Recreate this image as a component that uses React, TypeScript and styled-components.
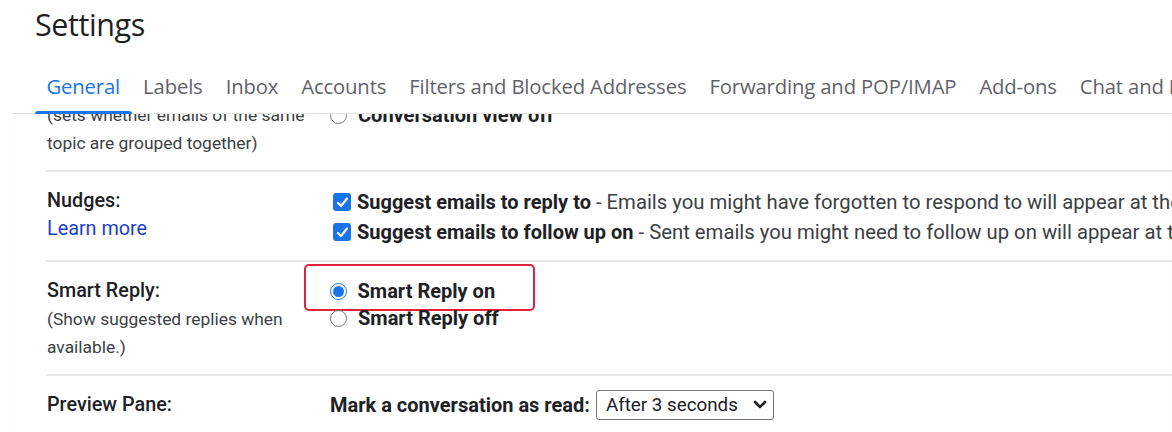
import * as React from "react";
import styled, { createGlobalStyle } from "styled-components";

const GlobalStyle = createGlobalStyle`
  html, body {
    margin: 0;
    padding: 0;
    background: #fff;
    overflow: hidden;
  }
  body {
    width: 1172px;
    height: 432px;
    font-family: Roboto, "Liberation Sans", sans-serif;
    color: #202124;
  }
`;

const Page = styled.div`
  width: 1172px;
  height: 432px;
  overflow: hidden;
  display: flex;
  flex-direction: column;
`;

const Header = styled.div`
  height: 57px;
  display: flex;
  align-items: center;
  padding-left: 35px;
  flex-shrink: 0;
`;

const Title = styled.h1`
  margin: 0;
  font-family: "Open Sans", Inter, sans-serif;
  font-weight: 400;
  font-size: 30.5px;
  letter-spacing: -0.4px;
  color: #1f1f1f;
  transform: translateY(-5px);
`;

const Panel = styled.div`
  margin-left: 12px;
  flex: 1;
  display: flex;
  flex-direction: column;
  min-height: 0;
  box-shadow: inset 0 1px 0 #e8e8e8, inset 0 2px 2px rgba(0, 0, 0, 0.04);
`;

const TabBar = styled.div`
  height: 56px;
  display: flex;
  align-items: stretch;
  padding-left: 23px;
  border-bottom: 1px solid #e3e3e3;
  white-space: nowrap;
  flex-shrink: 0;
  position: relative;
  z-index: 1;
  background: #fff;
`;

const Tab = styled.div<{ active?: boolean }>`
  position: relative;
  display: flex;
  align-items: center;
  padding: 2px 11.5px 0;
  font-family: "Open Sans", Inter, sans-serif;
  font-size: 20.3px;
  letter-spacing: -0.15px;
  color: ${(p) => (p.active ? "#1a73e8" : "#5f6368")};
  &:after {
    content: "";
    display: ${(p) => (p.active ? "block" : "none")};
    position: absolute;
    left: 0;
    right: 0;
    bottom: -1px;
    height: 3px;
    border-radius: 3px 3px 0 0;
    background: #1a73e8;
  }
`;

const Content = styled.div`
  flex: 1;
  overflow: hidden;
  padding-left: 34px;
`;

const Scroller = styled.div`
  margin-top: -56px;
`;

const Row = styled.div<{ last?: boolean }>`
  display: grid;
  grid-template-columns: 283px 1fr;
  padding: 15px 0 13px 1px;
  border-bottom: ${(p) => (p.last ? "none" : "2px solid #e8e8e8")};
  font-size: 19.8px;
  line-height: 28px;
  white-space: nowrap;
`;

const LabelCol = styled.div`
  display: flex;
  flex-direction: column;
`;

const Label = styled.div`
  font-weight: 500;
  color: #202124;
`;

const Sub = styled.div`
  font-size: 17.4px;
  color: #3c4043;
  white-space: normal;
  width: 270px;
`;

const Link = styled.a`
  color: #1a3fd0;
  text-decoration: none;
`;

const OptionCol = styled.div`
  display: flex;
  flex-direction: column;
  align-items: flex-start;
  min-width: 0;
`;

const Option = styled.label<{ tall?: boolean }>`
  display: flex;
  align-items: center;
  gap: 11px;
  height: ${(p) => (p.tall ? "30px" : "28px")};
  color: #202124;
`;

const Highlight = styled.div`
  margin: -13px 0 -7px -26px;
  padding: 11px 38px 4px 23.5px;
  border: 2.5px solid #e3203a;
  border-radius: 5px;
`;

const RadioDot = styled.span<{ checked?: boolean }>`
  width: 17px;
  height: 17px;
  box-sizing: border-box;
  border-radius: 50%;
  border: 1px solid ${(p) => (p.checked ? "#1a73e8" : "#767676")};
  background: #fff;
  display: flex;
  align-items: center;
  justify-content: center;
  flex-shrink: 0;
  &:after {
    content: "";
    display: ${(p) => (p.checked ? "block" : "none")};
    width: 11px;
    height: 11px;
    border-radius: 50%;
    background: #1a73e8;
  }
`;

const CheckBox = styled.span`
  width: 18px;
  height: 18px;
  margin-left: 3px;
  border-radius: 3px;
  background: #1a73e8;
  display: flex;
  align-items: center;
  justify-content: center;
  flex-shrink: 0;
  margin-right: -5px;
`;

const Strong = styled.b`
  font-weight: 700;
  font-size: 20px;
`;

const Desc = styled.span`
  font-size: 20.3px;
  color: #3c4043;
`;

const SelectRow = styled.div`
  display: flex;
  align-items: center;
  gap: 6px;
  height: 28px;
`;

const SelectBox = styled.div`
  width: 178px;
  height: 30px;
  box-sizing: border-box;
  border: 1px solid #767676;
  border-radius: 3px;
  display: flex;
  align-items: center;
  justify-content: space-between;
  padding: 0 3px 0 9px;
  font-size: 18.8px;
  color: #202124;
`;

const Radio = ({ checked, children }: { checked?: boolean; children: React.ReactNode }) => (
  <Option>
    <RadioDot checked={checked} />
    <Strong>{children}</Strong>
  </Option>
);

const Check = ({ title, desc }: { title: string; desc: string }) => (
  <Option tall>
    <CheckBox>
      <svg width="13" height="13" viewBox="0 0 13 13">
        <path d="M2 7 L5 10 L11 2.5" fill="none" stroke="#fff" strokeWidth="2.2" strokeLinecap="round" strokeLinejoin="round" />
      </svg>
    </CheckBox>
    <span>
      <Strong>{title}</Strong>
      <Desc> - {desc}</Desc>
    </span>
  </Option>
);

const tabs = [
  "General",
  "Labels",
  "Inbox",
  "Accounts",
  "Filters and Blocked Addresses",
  "Forwarding and POP/IMAP",
  "Add-ons",
  "Chat and Meet",
  "Advanced",
];

const App = () => (
  <Page>
    <GlobalStyle />
    <Header>
      <Title>Settings</Title>
    </Header>
    <Panel>
      <TabBar>
        {tabs.map((t, i) => (
          <Tab key={t} active={i === 0}>
            {t}
          </Tab>
        ))}
      </TabBar>
      <Content>
        <Scroller>
          <Row>
            <LabelCol>
              <Label>Conversation View:</Label>
              <Sub>(sets whether emails of the same topic are grouped together)</Sub>
            </LabelCol>
            <OptionCol>
              <Radio checked>Conversation view on</Radio>
              <Radio>Conversation view off</Radio>
            </OptionCol>
          </Row>
          <Row>
            <LabelCol>
              <Label>Nudges:</Label>
              <Link href="#">Learn more</Link>
            </LabelCol>
            <OptionCol>
              <Check
                title="Suggest emails to reply to"
                desc="Emails you might have forgotten to respond to will appear at the top of your inbox"
              />
              <Check
                title="Suggest emails to follow up on"
                desc="Sent emails you might need to follow up on will appear at the top of your inbox"
              />
            </OptionCol>
          </Row>
          <Row>
            <LabelCol>
              <Label>Smart Reply:</Label>
              <Sub>(Show suggested replies when available.)</Sub>
            </LabelCol>
            <OptionCol>
              <Highlight>
                <Radio checked>Smart Reply on</Radio>
              </Highlight>
              <Radio>Smart Reply off</Radio>
            </OptionCol>
          </Row>
          <Row last>
            <LabelCol>
              <Label>Preview Pane:</Label>
            </LabelCol>
            <OptionCol>
              <SelectRow>
                <Strong>Mark a conversation as read:</Strong>
                <SelectBox>
                  <span>After 3 seconds</span>
                  <svg width="20" height="12" viewBox="0 0 20 12">
                    <path d="M5 3 L10 8 L15 3" fill="none" stroke="#202124" strokeWidth="2.6" strokeLinecap="round" strokeLinejoin="round" />
                  </svg>
                </SelectBox>
              </SelectRow>
            </OptionCol>
          </Row>
        </Scroller>
      </Content>
    </Panel>
  </Page>
);

export default App;
